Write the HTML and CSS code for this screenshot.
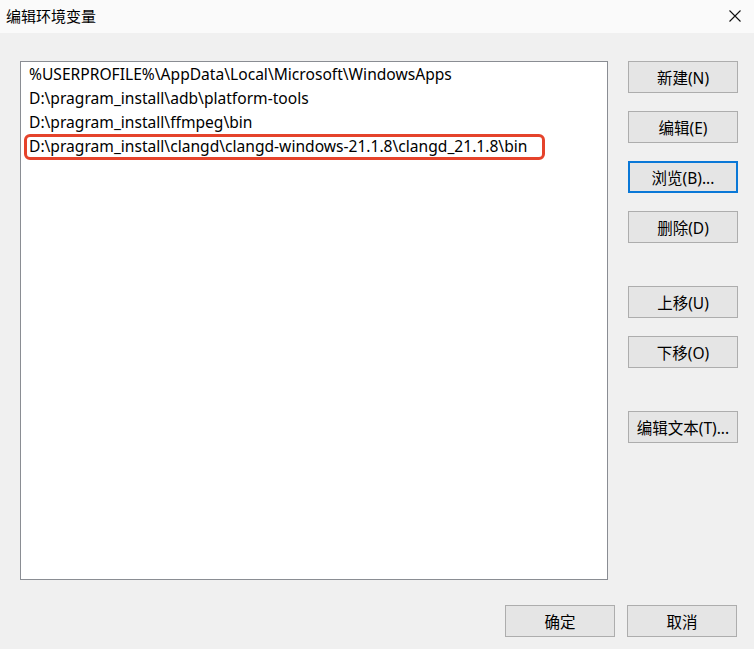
FILE: index.html
```html
<!DOCTYPE html>
<html lang="zh-CN">
<head>
<meta charset="utf-8">
<title>编辑环境变量</title>
<link rel="stylesheet" href="styles.css">
</head>
<body>
<div class="dialog">
  <header class="titlebar">
    <span class="title">编辑环境变量</span>
    <span class="close" aria-label="关闭">
      <svg width="12" height="12" viewBox="0 0 12 12"><path d="M0.5 0.5 L11.5 11.5 M11.5 0.5 L0.5 11.5" stroke="#111" stroke-width="1.1" fill="none"/></svg>
    </span>
  </header>
  <main class="body">
    <div class="list">
      <div class="row">%USERPROFILE%\AppData\Local\Microsoft\WindowsApps</div>
      <div class="row">D:\pragram_install\adb\platform-tools</div>
      <div class="row">D:\pragram_install\ffmpeg\bin</div>
      <div class="row marked">D:\pragram_install\clangd\clangd-windows-21.1.8\clangd_21.1.8\bin</div>
    </div>
    <div class="actions">
      <button class="btn">新建(N)</button>
      <button class="btn">编辑(E)</button>
      <button class="btn focused">浏览(B)...</button>
      <button class="btn">删除(D)</button>
      <button class="btn group">上移(U)</button>
      <button class="btn">下移(O)</button>
      <button class="btn group">编辑文本(T)...</button>
    </div>
  </main>
  <footer class="footer">
    <button class="btn">确定</button>
    <button class="btn">取消</button>
  </footer>
</div>
</body>
</html>
```

FILE: styles.css
```css
html, body {
  margin: 0;
  padding: 0;
}

body {
  width: 754px;
  height: 649px;
  background: #f0f0f0;
  font-family: "Noto Sans", "Noto Sans CJK SC", sans-serif;
  color: #000;
  overflow: hidden;
}

.dialog {
  display: flex;
  flex-direction: column;
  height: 649px;
}

.titlebar {
  height: 33px;
  background: #fafafa;
  display: flex;
  align-items: center;
  justify-content: space-between;
  padding: 0 13px 0 6px;
}

.title {
  font-family: "Noto Sans CJK SC", sans-serif;
  font-size: 15px;
  line-height: 20px;
  margin-top: -2px;
}

.close {
  display: flex;
  margin-top: -2px;
}

.body {
  display: flex;
  gap: 20px;
  padding: 28px 0 0 20px;
}

.list {
  width: 586px;
  height: 517px;
  background: #fff;
  border: 1px solid #8a8d93;
  box-sizing: content-box;
}

.row {
  position: relative;
  height: 24px;
  line-height: 24px;
  padding-left: 8px;
  font-size: 15.6px;
  white-space: nowrap;
}

/* red outline drawn over the fourth entry */
.row.marked::after {
  content: "";
  position: absolute;
  left: 3px;
  top: 0;
  width: 515px;
  height: 20px;
  border: 3px solid #e5432b;
  border-radius: 6px;
}

.actions {
  display: flex;
  flex-direction: column;
  gap: 18px;
}

.btn {
  width: 110px;
  height: 32px;
  box-sizing: border-box;
  background: #e5e5e5;
  border: 1px solid #adadad;
  font-family: "Noto Sans", "Noto Sans CJK SC", sans-serif;
  font-size: 15.5px;
  color: #000;
  padding: 0;
  margin: 0;
}

.btn.focused {
  border: 2px solid #0a78d7;
}

.btn.group {
  margin-top: 25px;
}

.footer {
  display: flex;
  justify-content: flex-end;
  gap: 12px;
  padding: 25px 17px 0 0;
}
```
